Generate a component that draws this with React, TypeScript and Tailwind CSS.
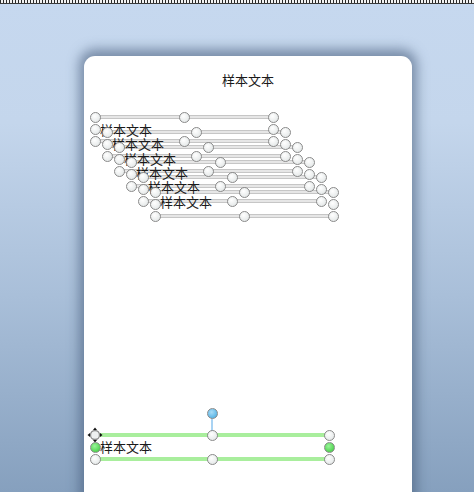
import React from 'react'

const FONT = { fontFamily: '"Noto Sans CJK SC", "Noto Sans", sans-serif' }

type HandleProps = { x: number; y: number; tone?: 'gray' | 'green' | 'blue' }

function Handle({ x, y, tone = 'gray' }: HandleProps) {
  const fill =
    tone === 'green'
      ? 'bg-[radial-gradient(circle_at_40%_35%,#9af59a,#36c636)]'
      : tone === 'blue'
        ? 'bg-[radial-gradient(circle_at_40%_35%,#a9dcf7,#3fa8e0)]'
        : 'bg-[radial-gradient(circle_at_40%_35%,#ffffff,#dde2e2)]'
  return (
    <span
      className={`absolute w-[11px] h-[11px] rounded-full border-[1.5px] border-[#8a8a8a] ${fill}`}
      style={{ left: x - 5.5, top: y - 5.5 }}
    />
  )
}

function Line({ x1, x2, y, green }: { x1: number; x2: number; y: number; green?: boolean }) {
  return (
    <span
      className={
        green
          ? 'absolute h-[4px] bg-[#a9ee9d]'
          : 'absolute h-[4px] bg-[#e6e6e6] border-y border-[#c6c6c6]'
      }
      style={{ left: x1, width: x2 - x1, top: y - 2 }}
    />
  )
}

function Label({ x, y }: { x: number; y: number }) {
  return (
    <span
      className="absolute text-[13px] text-[#1a1a1a] leading-[16px] whitespace-nowrap"
      style={{ left: x, top: y - 8, ...FONT }}
    >
      样本文本
    </span>
  )
}

const BOXES = [0, 1, 2, 3, 4, 5].map(i => {
  const l = 11 + 12 * i
  const r = 189 + 12 * i
  const t = 61 + 15 * i
  return { l, r, t, b: t + 24, m: (l + r) / 2, c: t + 12, ly: 74 + 14.3 * i }
})

function MoveHandle({ x, y }: { x: number; y: number }) {
  return (
    <svg className="absolute" style={{ left: x - 8, top: y - 8 }} width="16" height="16" viewBox="0 0 16 16">
      <circle cx="8" cy="8" r="4.5" fill="#eef0f0" stroke="#8a8a8a" strokeWidth="1.3" />
      <path d="M8 0.5 L10 3 L6 3 Z" fill="#111" />
      <path d="M8 15.5 L10 13 L6 13 Z" fill="#111" />
      <path d="M0.5 8 L3 6 L3 10 Z" fill="#111" />
      <path d="M15.5 8 L13 6 L13 10 Z" fill="#111" />
    </svg>
  )
}

export default function App() {
  const sel = { l: 11, r: 245, t: 379, b: 403 }
  const selMid = 128
  return (
    <div className="w-[474px] h-[492px] overflow-hidden flex flex-col bg-[linear-gradient(180deg,#c6d8ef_0%,#c4d6ec_25%,#a9bfd9_60%,#86a0be_100%)]">
      <div className="h-[4px] shrink-0 bg-[repeating-linear-gradient(90deg,#2a2a2a_0px,#2a2a2a_1px,#f2f2f2_1px,#f2f2f2_3px)] border-b-[1.5px] border-[#3a3a3a]" />
      <div className="relative ml-[84px] mt-[52px] w-[328px] h-[480px] shrink-0 bg-white rounded-t-[11px] shadow-[0_-2px_12px_5px_rgba(70,92,122,0.6)]">
        <div className="pt-[16px] text-center text-[13px] leading-[16px] text-[#1a1a1a]" style={FONT}>
          样本文本
        </div>

        {BOXES.map((b, i) => (
          <React.Fragment key={`l${i}`}>
            <Line x1={b.l} x2={b.r} y={b.t} />
            <Line x1={b.l} x2={b.r} y={b.b} />
          </React.Fragment>
        ))}
        {BOXES.map((b, i) => (
          <Label key={`t${i}`} x={b.l + 5} y={b.ly} />
        ))}
        {BOXES.map((b, i) => (
          <React.Fragment key={`h${i}`}>
            <Handle x={b.l} y={b.t} />
            <Handle x={b.m} y={b.t} />
            <Handle x={b.r} y={b.t} />
            <Handle x={b.l} y={b.c} />
            <Handle x={b.r} y={b.c} />
            <Handle x={b.l} y={b.b} />
            <Handle x={b.m} y={b.b} />
            <Handle x={b.r} y={b.b} />
          </React.Fragment>
        ))}

        <span className="absolute w-[2px] bg-[#a9d3f3]" style={{ left: selMid - 1, top: 357, height: sel.t - 357 }} />
        <Line x1={sel.l} x2={sel.r} y={sel.t} green />
        <Line x1={sel.l} x2={sel.r} y={sel.b} green />
        <Label x={sel.l + 5} y={391} />
        <Handle x={selMid} y={357} tone="blue" />
        <MoveHandle x={sel.l} y={sel.t} />
        <Handle x={selMid} y={sel.t} />
        <Handle x={sel.r} y={sel.t} />
        <Handle x={sel.l} y={391} tone="green" />
        <Handle x={sel.r} y={391} tone="green" />
        <Handle x={sel.l} y={sel.b} />
        <Handle x={selMid} y={sel.b} />
        <Handle x={sel.r} y={sel.b} />
      </div>
    </div>
  )
}
